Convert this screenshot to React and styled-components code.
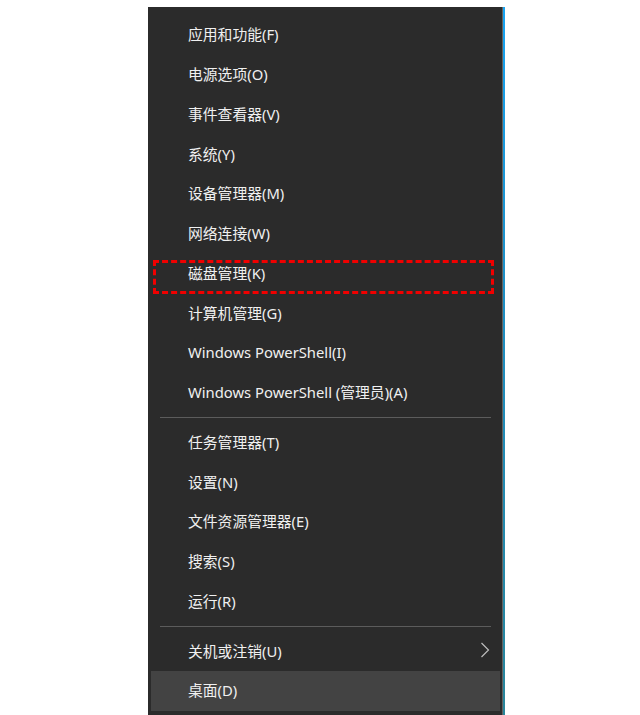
import React from "react";
import styled, { createGlobalStyle } from "styled-components";

const Global = createGlobalStyle`
  html, body { margin: 0; padding: 0; background: #ffffff; overflow: hidden; }
  body { width: 640px; height: 715px; }
`;

const Page = styled.div`
  padding: 7px 0 0 148px;
  font-family: "Noto Sans", "Noto Sans CJK SC", sans-serif;
`;

const Frame = styled.div`
  display: inline-flex;
  padding-right: 2px;
  background: linear-gradient(180deg, #18a4f2 0%, #1f8fc4 40%, #2a8599 100%);
`;

const Panel = styled.div`
  width: 355px;
  height: 720px;
  box-sizing: border-box;
  padding: 8px 2px 0 3px;
  background: #2b2b2b;
  border-right: 1px solid #626262;
  display: flex;
  flex-direction: column;
`;

const Item = styled.div`
  position: relative;
  height: 39.75px;
  box-sizing: border-box;
  display: flex;
  align-items: center;
  justify-content: space-between;
  padding: 0 10px 2px 37px;
  color: #f0f0f0;
  font-size: 14.8px;
  background: ${(p) => (p.$active ? "#434343" : "transparent")};
  flex-shrink: 0;
`;

const Mark = styled.div`
  position: absolute;
  left: 2px;
  right: 6px;
  top: 6px;
  bottom: -1px;
  border: 3px dashed #f00000;
  pointer-events: none;
`;

const Separator = styled.div`
  height: 10px;
  display: flex;
  align-items: center;
  padding: 0 9px;
  flex-shrink: 0;
  &::after {
    content: "";
    flex: 1;
    height: 1px;
    background: #5c5c5c;
  }
`;

const Chevron = () => (
  <svg width="10" height="16" viewBox="0 0 10 16" fill="none">
    <path d="M1.5 1 L8.5 8 L1.5 15" stroke="#bdbdbd" strokeWidth="1.2" />
  </svg>
);

const groups = [
  [
    "应用和功能(F)",
    "电源选项(O)",
    "事件查看器(V)",
    "系统(Y)",
    "设备管理器(M)",
    "网络连接(W)",
    { label: "磁盘管理(K)", marked: true },
    "计算机管理(G)",
    "Windows PowerShell(I)",
    "Windows PowerShell (管理员)(A)",
  ],
  ["任务管理器(T)", "设置(N)", "文件资源管理器(E)", "搜索(S)", "运行(R)"],
  [{ label: "关机或注销(U)", sub: true }, { label: "桌面(D)", active: true }],
];

export default function App() {
  return (
    <>
      <Global />
      <Page>
        <Frame>
          <Panel>
            {groups.map((g, gi) => (
              <React.Fragment key={gi}>
                {gi > 0 && <Separator />}
                {g.map((it) => {
                  const o = typeof it === "string" ? { label: it } : it;
                  return (
                    <Item key={o.label} $active={o.active}>
                      <span>{o.label}</span>
                      {o.sub && <Chevron />}
                      {o.marked && <Mark />}
                    </Item>
                  );
                })}
              </React.Fragment>
            ))}
          </Panel>
        </Frame>
      </Page>
    </>
  );
}
